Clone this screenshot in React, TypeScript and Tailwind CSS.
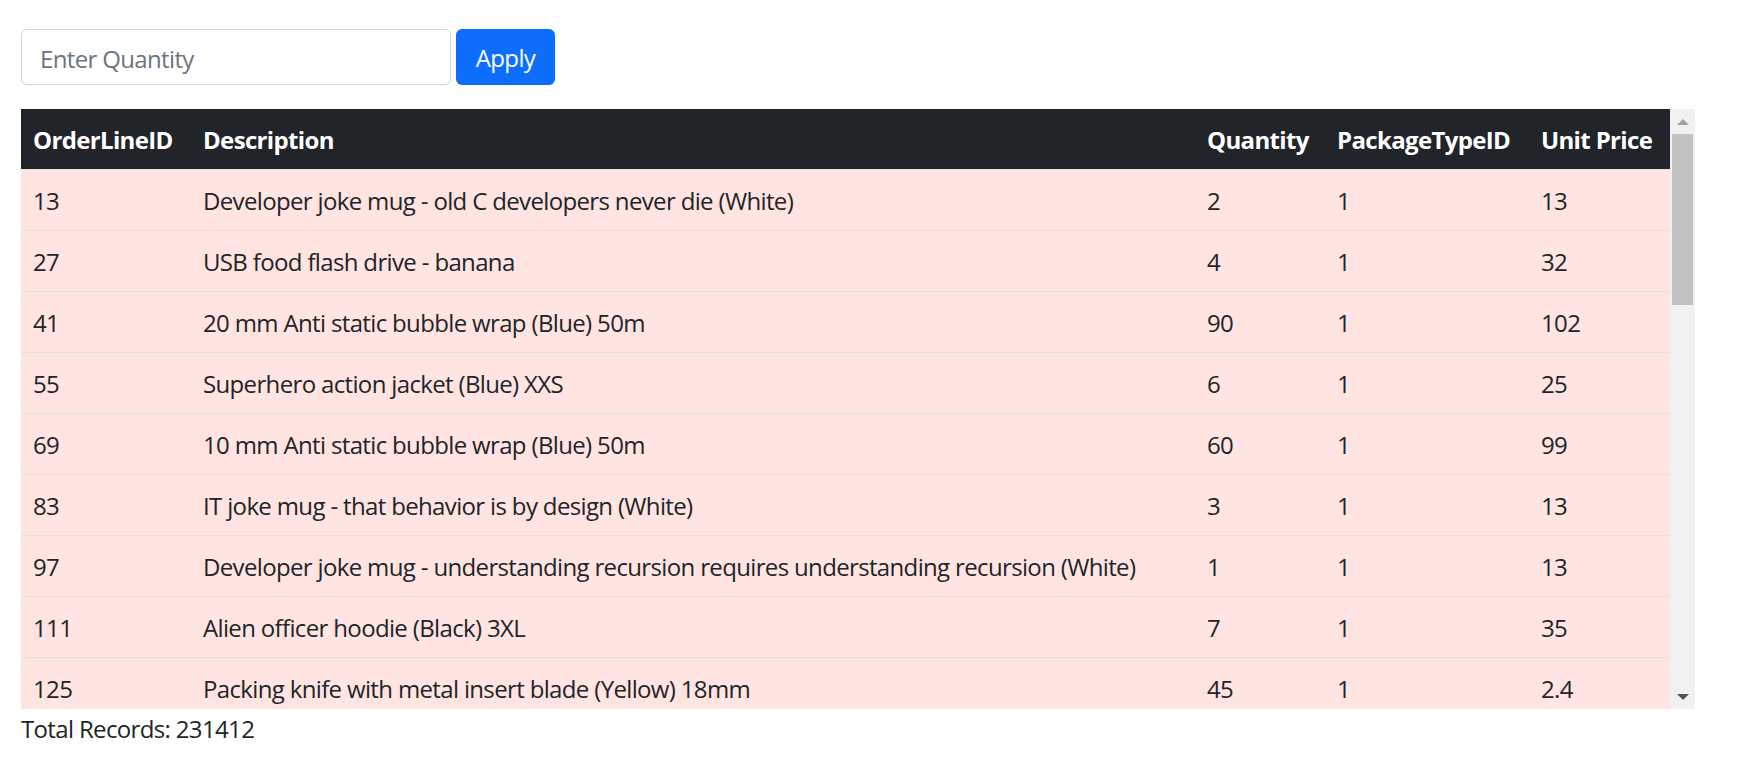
const rows = [
  { id: 13, desc: "Developer joke mug - old C developers never die (White)", qty: 2, pkg: 1, price: "13" },
  { id: 27, desc: "USB food flash drive - banana", qty: 4, pkg: 1, price: "32" },
  { id: 41, desc: "20 mm Anti static bubble wrap (Blue) 50m", qty: 90, pkg: 1, price: "102" },
  { id: 55, desc: "Superhero action jacket (Blue) XXS", qty: 6, pkg: 1, price: "25" },
  { id: 69, desc: "10 mm Anti static bubble wrap (Blue) 50m", qty: 60, pkg: 1, price: "99" },
  { id: 83, desc: "IT joke mug - that behavior is by design (White)", qty: 3, pkg: 1, price: "13" },
  { id: 97, desc: "Developer joke mug - understanding recursion requires understanding recursion (White)", qty: 1, pkg: 1, price: "13" },
  { id: 111, desc: "Alien officer hoodie (Black) 3XL", qty: 7, pkg: 1, price: "35" },
  { id: 125, desc: "Packing knife with metal insert blade (Yellow) 18mm", qty: 45, pkg: 1, price: "2.4" },
];

export default function App() {
  return (
    <div className="min-h-screen bg-white pl-[21px] pt-[29px] font-['Open_Sans',sans-serif] text-[24px] leading-[36px] tracking-[-0.65px] text-[#212529]">
      <div className="flex gap-[5px]">
        <input
          type="text"
          placeholder="Enter Quantity"
          className="h-[56px] w-[430px] rounded-[6px] border border-[#ced4da] bg-white px-[18px] pt-[2px] text-[24px] text-[#212529] outline-none placeholder:text-[#6c757d]"
        />
        <button className="h-[56px] w-[99px] rounded-[6px] bg-[#0d6efd] pt-[2px] text-[24px] text-white">Apply</button>
      </div>

      <div className="mt-[24px] flex h-[600px] w-[1674px]">
        <div className="h-full w-[1649px] overflow-hidden">
          <table className="w-full table-fixed border-collapse text-left">
            <colgroup>
              <col className="w-[170px]" />
              <col className="w-[1004px]" />
              <col className="w-[130px]" />
              <col className="w-[204px]" />
              <col className="w-[141px]" />
            </colgroup>
            <thead>
              <tr className="bg-[#212529] text-white">
                <th className="px-[12px] pb-[11px] pt-[13px] font-bold">OrderLineID</th>
                <th className="px-[12px] pb-[11px] pt-[13px] font-bold">Description</th>
                <th className="px-[12px] pb-[11px] pt-[13px] font-bold">Quantity</th>
                <th className="px-[12px] pb-[11px] pt-[13px] font-bold">PackageTypeID</th>
                <th className="px-[12px] pb-[11px] pt-[13px] font-bold">Unit Price</th>
              </tr>
            </thead>
            <tbody>
              {rows.map((r) => (
                <tr key={r.id} className="border-t border-[#dee2e6] bg-[#ffe4e1]">
                  <td className="px-[12px] pb-[11px] pt-[13px]">{r.id}</td>
                  <td className="whitespace-nowrap px-[12px] pb-[11px] pt-[13px]">{r.desc}</td>
                  <td className="px-[12px] pb-[11px] pt-[13px]">{r.qty}</td>
                  <td className="px-[12px] pb-[11px] pt-[13px]">{r.pkg}</td>
                  <td className="px-[12px] pb-[11px] pt-[13px]">{r.price}</td>
                </tr>
              ))}
            </tbody>
          </table>
        </div>

        {/* scrollbar */}
        <div className="flex w-[25px] flex-col bg-[#f1f1f1]">
          <div className="flex h-[25px] items-center justify-center">
            <div className="h-0 w-0 border-x-[6px] border-b-[6px] border-x-transparent border-b-[#a3a3a3]" />
          </div>
          <div className="flex-1 px-[2px]">
            <div className="h-[171px] bg-[#c1c1c1]" />
          </div>
          <div className="flex h-[25px] items-center justify-center">
            <div className="h-0 w-0 border-x-[6px] border-t-[6px] border-x-transparent border-t-[#505050]" />
          </div>
        </div>
      </div>

      <div className="pt-[2px]">Total Records: 231412</div>
    </div>
  );
}
